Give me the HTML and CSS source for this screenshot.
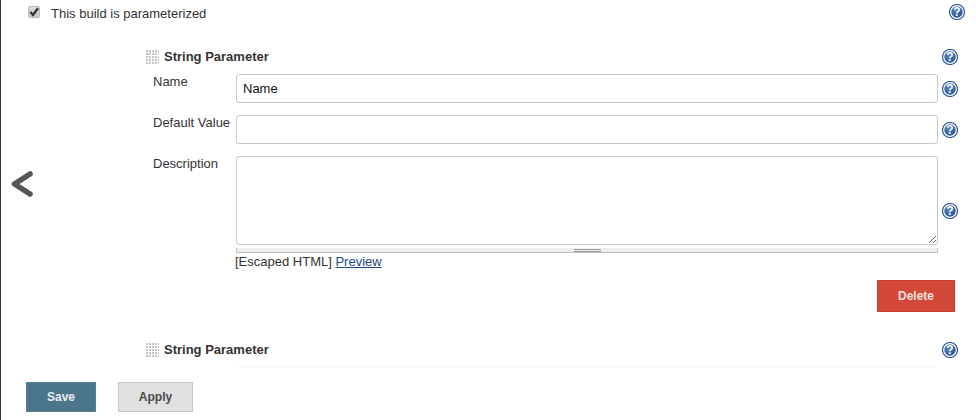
FILE: index.html
```html
<!DOCTYPE html>
<html lang="en">
<head>
<meta charset="utf-8">
<title>Build parameters</title>
<link rel="stylesheet" href="styles.css">
</head>
<body>
<svg class="defs" width="0" height="0" aria-hidden="true">
  <defs>
    <radialGradient id="helpfill" cx="40%" cy="30%" r="75%">
      <stop offset="0" stop-color="#5f88bd"/>
      <stop offset="1" stop-color="#244f92"/>
    </radialGradient>
    <pattern id="dots" width="3" height="3" patternUnits="userSpaceOnUse">
      <rect width="2" height="2" fill="#c4c4c4"/>
    </pattern>
  </defs>
</svg>
<main class="page">
  <svg class="collapse" width="24" height="30" viewBox="0 0 24 30" aria-hidden="true">
    <path d="M20 4 L4.5 14 L20 24" fill="none" stroke="#555" stroke-width="5.6" stroke-linecap="round" stroke-linejoin="round"/>
  </svg>

  <div class="option">
    <span class="check"><svg width="12" height="12" viewBox="0 0 12 12"><path d="M2.4 6 L5 9 L10 2.2" fill="none" stroke="#333" stroke-width="2.3"/></svg></span>
    <span class="option-label">This build is parameterized</span>
    <span class="help help-top"><svg class="help-ring" width="16" height="16" viewBox="0 0 16 16"><circle cx="8" cy="8" r="7.5" fill="#fff" stroke="#2a5797" stroke-width="1.2"/><circle cx="8" cy="8" r="5.7" fill="url(#helpfill)"/></svg><b>?</b></span>
  </div>

  <section class="params">
    <header class="param-head">
      <svg class="grip" width="13" height="15" aria-hidden="true"><rect width="13" height="15" fill="url(#dots)"/></svg>
      <strong class="param-title">String Parameter</strong>
      <span class="help"><svg class="help-ring" width="16" height="16" viewBox="0 0 16 16"><circle cx="8" cy="8" r="7.5" fill="#fff" stroke="#2a5797" stroke-width="1.2"/><circle cx="8" cy="8" r="5.7" fill="url(#helpfill)"/></svg><b>?</b></span>
    </header>

    <div class="field field-name">
      <label class="field-label">Name</label>
      <div class="control"><input class="text-input" type="text" value="Name"></div>
      <span class="help"><svg class="help-ring" width="16" height="16" viewBox="0 0 16 16"><circle cx="8" cy="8" r="7.5" fill="#fff" stroke="#2a5797" stroke-width="1.2"/><circle cx="8" cy="8" r="5.7" fill="url(#helpfill)"/></svg><b>?</b></span>
    </div>

    <div class="field field-default">
      <label class="field-label">Default Value</label>
      <div class="control"><input class="text-input" type="text"></div>
      <span class="help"><svg class="help-ring" width="16" height="16" viewBox="0 0 16 16"><circle cx="8" cy="8" r="7.5" fill="#fff" stroke="#2a5797" stroke-width="1.2"/><circle cx="8" cy="8" r="5.7" fill="url(#helpfill)"/></svg><b>?</b></span>
    </div>

    <div class="field field-desc">
      <label class="field-label">Description</label>
      <div class="control">
        <textarea class="text-area"></textarea>
        <div class="grippie"><span class="grippie-mark"></span></div>
      </div>
      <span class="help help-mid"><svg class="help-ring" width="16" height="16" viewBox="0 0 16 16"><circle cx="8" cy="8" r="7.5" fill="#fff" stroke="#2a5797" stroke-width="1.2"/><circle cx="8" cy="8" r="5.7" fill="url(#helpfill)"/></svg><b>?</b></span>
    </div>

    <p class="format">[Escaped HTML] <a href="#preview">Preview</a></p>

    <div class="delete-row"><button class="btn btn-delete" type="button">Delete</button></div>

    <header class="param-head param-head-last">
      <svg class="grip" width="13" height="15" aria-hidden="true"><rect width="13" height="15" fill="url(#dots)"/></svg>
      <strong class="param-title">String Parameter</strong>
      <span class="help"><svg class="help-ring" width="16" height="16" viewBox="0 0 16 16"><circle cx="8" cy="8" r="7.5" fill="#fff" stroke="#2a5797" stroke-width="1.2"/><circle cx="8" cy="8" r="5.7" fill="url(#helpfill)"/></svg><b>?</b></span>
    </header>
    <div class="param-end"></div>
  </section>

  <footer class="actions">
    <button class="btn btn-save" type="button">Save</button>
    <button class="btn btn-apply" type="button">Apply</button>
  </footer>
</main>
</body>
</html>
```

FILE: styles.css
```css
* {
  box-sizing: border-box;
}

html,
body {
  margin: 0;
  height: 100%;
  background: #fff;
}

body {
  font-family: "Liberation Sans", Arial, sans-serif;
  font-size: 13px;
  line-height: 16px;
  color: #333;
  overflow: hidden;
}

.defs {
  position: absolute;
}

.page {
  position: relative;
  width: 976px;
  height: 420px;
  border-left: 1px solid #333;
  overflow: hidden;
}

.collapse {
  position: absolute;
  left: 9px;
  top: 170px;
}

.option {
  display: flex;
  align-items: center;
  height: 24px;
  padding: 0 11px 0 27px;
}

.check {
  display: block;
  width: 12px;
  height: 12px;
  margin-top: -1px;
  background: linear-gradient(#dcdcdc, #c9c9c9);
  border: 1px solid #bbb;
  border-radius: 2px;
  line-height: 0;
}

.check svg {
  margin: -1px;
}

.option-label {
  margin-left: 11px;
  margin-top: 4px;
  flex: 1;
}

.help {
  position: relative;
  flex: none;
  display: block;
  width: 16px;
  height: 16px;
}

.help-ring {
  display: block;
}

.help b {
  position: absolute;
  inset: 0;
  color: #fff;
  font-size: 12px;
  line-height: 16px;
  text-align: center;
}

.params {
  margin-left: 144px;
  width: 821px;
  padding-top: 24px;
}

.param-head {
  display: flex;
  align-items: center;
  height: 18px;
}

.grip {
  flex: none;
  margin-left: 1px;
}

.param-title {
  flex: 1;
  margin-left: 5px;
}

.param-head .help {
  margin-right: 8px;
}

.field {
  display: flex;
  align-items: center;
  padding-left: 8px;
}

.field-name {
  margin-top: 8px;
}

.field-default {
  margin-top: 12px;
}

.field-desc {
  margin-top: 12px;
  align-items: flex-start;
}

.field-label {
  flex: none;
  width: 83px;
  align-self: flex-start;
}

.control {
  flex: none;
  width: 702px;
}

.field .help {
  margin-left: 4px;
}

.help-mid {
  margin-top: 47px;
}

.text-input {
  display: block;
  width: 100%;
  height: 29px;
  padding: 0 6px;
  font: 13px "Liberation Sans", Arial, sans-serif;
  color: #111;
  background: #fff;
  border: 1px solid #c6c6c6;
  border-radius: 3px;
}

.text-area {
  display: block;
  width: 100%;
  height: 89px;
  padding: 6px;
  font: 13px "Liberation Sans", Arial, sans-serif;
  background: #fff;
  border: 1px solid #c6c6c6;
  border-radius: 3px;
  resize: vertical;
}

.grippie {
  display: flex;
  justify-content: center;
  height: 5px;
  margin-top: 3px;
  background: #eee;
  border-left: 1px solid #c0c0c0;
  border-right: 1px solid #c0c0c0;
  border-bottom: 1px solid #bdbdbd;
}

.grippie-mark {
  display: block;
  width: 27px;
  height: 3px;
  margin-top: 1px;
  border-top: 1px solid #999;
  border-bottom: 1px solid #999;
}

.format {
  margin: 0 0 0 90px;
  padding-top: 1px;
}

.format a {
  color: #204a87;
}

.delete-row {
  display: flex;
  justify-content: flex-end;
  margin-top: 10px;
  padding-right: 11px;
}

.btn {
  display: block;
  padding: 0;
  font: bold 12px "Liberation Sans", Arial, sans-serif;
  border-radius: 0;
  cursor: pointer;
}

.btn-delete {
  width: 78px;
  height: 32px;
  color: #f2e0dd;
  background: #d24939;
  border: 1px solid #c43c2d;
}

.param-head-last {
  margin-top: 29px;
}

.param-end {
  height: 1px;
  margin: 8px 29px 0 92px;
  background: #f8f8f8;
}

.actions {
  display: flex;
  gap: 22px;
  margin-left: 25px;
  margin-top: 14px;
}

.btn-save {
  width: 70px;
  height: 30px;
  color: #e9eff3;
  background: #4b758b;
  border: 1px solid #5a8196;
}

.btn-apply {
  width: 75px;
  height: 30px;
  color: #4b4b4b;
  background: #e0e0e0;
  border: 1px solid #c6c6c6;
}
```
